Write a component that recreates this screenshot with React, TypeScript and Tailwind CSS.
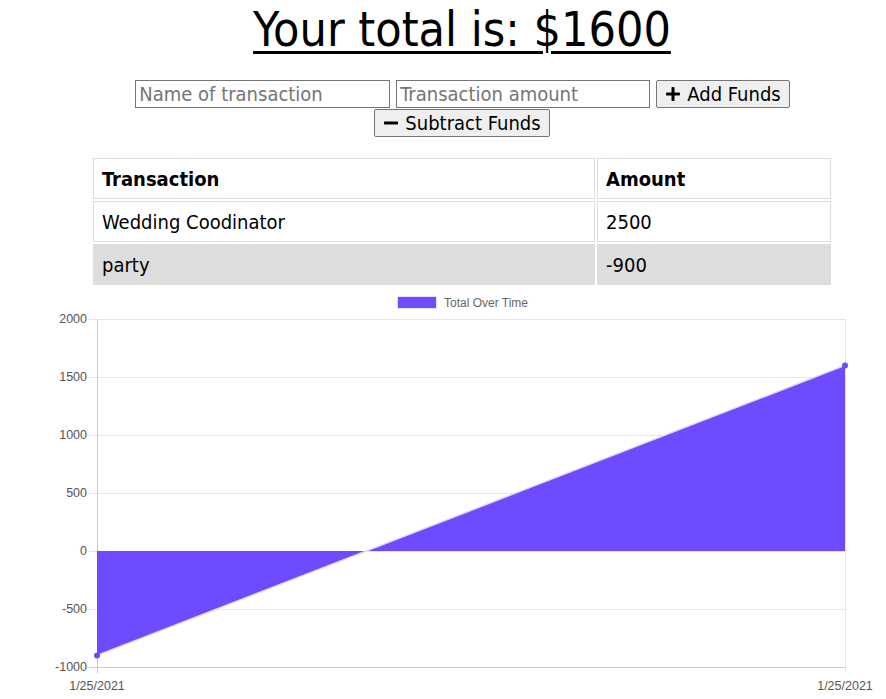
import { FaPlus, FaMinus } from "react-icons/fa";

const rows = [
    { name: "Wedding Coodinator", amount: "2500", shaded: false },
    { name: "party", amount: "-900", shaded: true },
];

const yTicks = [2000, 1500, 1000, 500, 0, -500, -1000];

// plot area in px
const left = 97;
const right = 845;
const top = 29;
const bottom = 377;
const yOf = (v: number) => top + ((2000 - v) / 3000) * (bottom - top);

function Chart() {
    const y0 = yOf(0);
    const yA = yOf(-900);
    const yB = yOf(1600);
    const crossX = left + ((right - left) * 900) / 2500;
    return (
        <svg width={886} height={409} className="block" style={{ fontFamily: "'Liberation Sans', Arial, sans-serif" }}>
            {/* legend */}
            <rect x={397.5} y={6.5} width={39} height={12} fill="#6f4bff" stroke="#e6e3f7" strokeWidth={1} />
            <text x={444} y={16.5} fontSize={12} fill="#666">Total Over Time</text>

            {/* grid */}
            {yTicks.map((t) => (
                <g key={t}>
                    <line x1={89} x2={right} y1={yOf(t) + 0.5} y2={yOf(t) + 0.5} stroke={t === -1000 ? "#ccc" : "#e6e6e6"} />
                    <text x={87} y={yOf(t) + 4} fontSize={12.5} fill="#555" textAnchor="end">{t}</text>
                </g>
            ))}
            <line x1={left + 0.5} x2={left + 0.5} y1={top} y2={bottom + 6} stroke="#ccc" />
            <line x1={right + 0.5} x2={right + 0.5} y1={top} y2={bottom + 6} stroke="#e6e6e6" />

            {/* area */}
            <polygon points={`${left},${y0} ${left},${yA} ${crossX},${y0}`} fill="#6f4bff" />
            <polygon points={`${crossX},${y0} ${right},${yB} ${right},${y0}`} fill="#6f4bff" />
            <line x1={left} y1={yA} x2={right} y2={yB} stroke="#e0dcef" strokeWidth={1.5} />
            <circle cx={left} cy={yA} r={3} fill="#6f4bff" />
            <circle cx={right} cy={yB} r={3} fill="#6f4bff" />

            <text x={left} y={bottom + 23} fontSize={12.5} fill="#555" textAnchor="middle">1/25/2021</text>
            <text x={right} y={bottom + 23} fontSize={12.5} fill="#555" textAnchor="middle">1/25/2021</text>
        </svg>
    );
}

export default function App() {
    return (
        <div className="w-[886px] h-[699px] overflow-hidden bg-white text-black" style={{ fontFamily: "'DejaVu Sans Condensed', 'DejaVu Sans', sans-serif" }}>
            <div className="pl-[38px]">
                <h1 className="text-center text-[48px] leading-[56px] pt-[1px] underline decoration-[3px] underline-offset-[5px]">
                    Your total is: $1600
                </h1>

                <div className="flex flex-col items-center mt-[23px]">
                    <div className="flex items-center gap-[6px] pl-[1px]">
                        <input
                            placeholder="Name of transaction"
                            className="w-[255px] h-[28px] border border-[#767676] px-[3px] text-[20px] placeholder:text-[#757575] outline-none"
                        />
                        <input
                            placeholder="Transaction amount"
                            className="w-[254px] h-[28px] border border-[#767676] px-[3px] text-[20px] placeholder:text-[#757575] outline-none"
                        />
                        <button className="h-[28px] px-[8px] flex items-center gap-[6px] bg-[#efefef] border border-[#767676] rounded-[2px] text-[20px]">
                            <FaPlus size={16} />Add Funds
                        </button>
                    </div>
                    <button className="mt-[1px] h-[28px] px-[8px] flex items-center gap-[6px] bg-[#efefef] border border-[#767676] rounded-[2px] text-[20px]">
                        <FaMinus size={16} />Subtract Funds
                    </button>
                </div>
            </div>

            <div className="mt-[21px] ml-[93px] w-[738px] flex flex-col gap-[2px] text-[20px]">
                <div className="grid grid-cols-[502px_234px] gap-[2px] h-[41px]">
                    <div className="border border-[#ddd] px-[8px] flex items-center font-bold">Transaction</div>
                    <div className="border border-[#ddd] px-[8px] flex items-center font-bold">Amount</div>
                </div>
                {rows.map((r) => (
                    <div key={r.name} className="grid grid-cols-[502px_234px] gap-[2px] h-[41px]">
                        <div className={`border border-[#ddd] px-[8px] flex items-center ${r.shaded ? "bg-[#ddd]" : ""}`}>{r.name}</div>
                        <div className={`border border-[#ddd] px-[8px] flex items-center ${r.shaded ? "bg-[#ddd]" : ""}`}>{r.amount}</div>
                    </div>
                ))}
            </div>

            <div className="mt-[5px]">
                <Chart />
            </div>
        </div>
    );
}
